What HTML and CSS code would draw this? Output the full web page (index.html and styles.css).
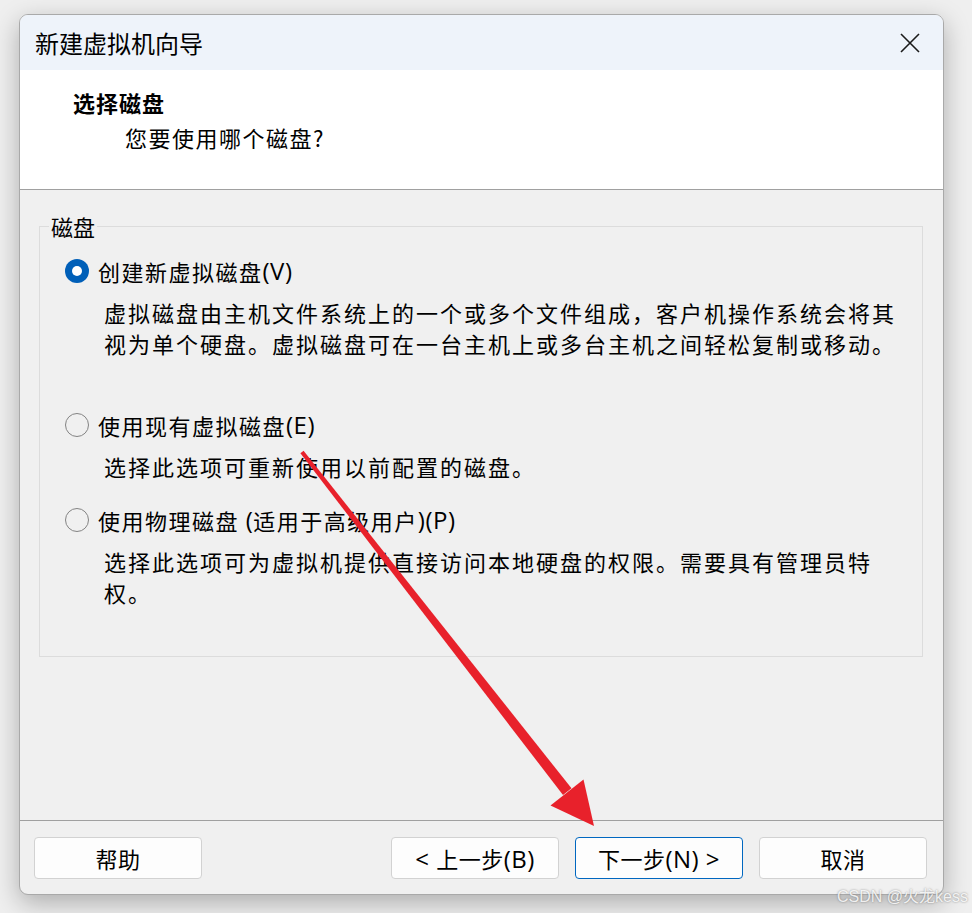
FILE: index.html
```html
<!DOCTYPE html>
<html lang="zh-CN">
<head>
<meta charset="utf-8">
<title>新建虚拟机向导</title>
<link rel="stylesheet" href="styles.css">
</head>
<body>
<div class="window">
  <div class="titlebar">
    <span class="title">新建虚拟机向导</span>
    <svg class="close" width="20" height="20" viewBox="0 0 20 20"><path d="M1 1 L19 19 M19 1 L1 19" stroke="#1a1a1a" stroke-width="1.6" fill="none"/></svg>
  </div>
  <div class="header">
    <div class="heading">选择磁盘</div>
    <div class="subheading">您要使用哪个磁盘?</div>
  </div>
  <div class="content">
    <fieldset class="group">
      <legend class="legend">磁盘</legend>
      <div class="option opt1">
        <div class="label"><span class="radio checked"></span>创建新虚拟磁盘<span class="key">(V)</span></div>
        <div class="desc">虚拟磁盘由主机文件系统上的一个或多个文件组成，客户机操作系统会将其视为单个硬盘。虚拟磁盘可在一台主机上或多台主机之间轻松复制或移动。</div>
      </div>
      <div class="option opt2">
        <div class="label"><span class="radio"></span>使用现有虚拟磁盘<span class="key">(E)</span></div>
        <div class="desc">选择此选项可重新使用以前配置的磁盘。</div>
      </div>
      <div class="option opt3">
        <div class="label"><span class="radio"></span>使用物理磁盘<span class="key">&nbsp;(</span>适用于高级用户<span class="key">)(P)</span></div>
        <div class="desc">选择此选项可为虚拟机提供直接访问本地硬盘的权限。需要具有管理员特权。</div>
      </div>
    </fieldset>
  </div>
  <div class="footer">
    <button class="btn">帮助</button>
    <div class="nav">
      <button class="btn"><span class="key">&lt; </span>上一步<span class="key">(B)</span></button>
      <button class="btn primary">下一步<span class="key">(N) &gt;</span></button>
      <button class="btn">取消</button>
    </div>
  </div>
</div>
<svg class="annotation" width="972" height="913" viewBox="0 0 972 913">
  <polygon fill="#e8212b" points="300.4,453.2 303.6,450.8 571.5,788.3 563.0,795.0"/>
  <polygon fill="#e8212b" points="594,826 550.5,805.5 583.5,779.5"/>
</svg>
<div class="watermark">CSDN @火龙kess</div>
</body>
</html>
```

FILE: styles.css
```css
* { box-sizing: border-box; }
html, body {
  margin: 0;
  padding: 0;
  width: 972px;
  height: 913px;
  overflow: hidden;
}
body {
  background: #efefef;
  font-family: "Noto Sans CJK SC", "Noto Sans", sans-serif;
  color: #000;
  position: relative;
}
.window {
  margin: 14px 0 0 19px;
  width: 925px;
  height: 881px;
  border: 1px solid #a9a9a9;
  border-radius: 9px;
  overflow: hidden;
  display: flex;
  flex-direction: column;
  background: #f0f0f0;
  box-shadow: 0 8px 26px rgba(0, 0, 0, 0.28);
}
.titlebar {
  height: 55px;
  flex: none;
  background: #eef3fa;
  display: flex;
  align-items: center;
  justify-content: space-between;
  padding: 0 23px 0 15px;
}
.title {
  font-size: 24px;
  line-height: 30px;
  color: #000;
}
.close { display: block; margin-top: 1px; }
.header {
  height: 120px;
  flex: none;
  background: #fff;
  border-bottom: 1px solid #a0a0a0;
  padding: 16px 0 0 53px;
}
.heading {
  font-size: 22px;
  line-height: 32px;
  font-weight: 700;
  letter-spacing: 1px;
}
.subheading {
  margin: 3px 0 0 52px;
  font-size: 22px;
  line-height: 32px;
  letter-spacing: 1.5px;
}
.content {
  flex: 1;
  padding: 21px 20px 0 19px;
}
.group {
  margin: 0;
  padding: 0 0 48px 0;
  border: 1px solid #dcdcdc;
  min-width: 0;
}
.legend {
  margin-left: 9px;
  padding: 0 2px;
  font-size: 22px;
  line-height: 30px;
}
.option { padding-left: 25px; }
.opt1 { margin-top: 15px; }
.opt2 { margin-top: 51px; }
.opt3 { margin-top: 23px; }
.label {
  display: flex;
  align-items: center;
  font-size: 22px;
  line-height: 30px;
  letter-spacing: 1.5px;
  white-space: pre;
}
.key {
  font-family: "Open Sans", "Noto Sans", sans-serif;
  font-size: 24px;
  letter-spacing: 0.5px;
}
.radio {
  width: 24px;
  height: 24px;
  border-radius: 50%;
  border: 1.5px solid #838383;
  margin-right: 9px;
  flex: none;
  position: relative;
}
.radio.checked {
  border: none;
  background: #005fb8;
}
.radio.checked::after {
  content: "";
  position: absolute;
  left: 7px;
  top: 7px;
  width: 10px;
  height: 10px;
  border-radius: 50%;
  background: #fff;
}
.desc {
  margin: 11px 0 0 39px;
  max-width: 808px;
  font-size: 22px;
  line-height: 31px;
  letter-spacing: 2px;
}
.footer {
  height: 74px;
  flex: none;
  border-top: 1px solid #a0a0a0;
  display: flex;
  justify-content: space-between;
  padding: 16px 16px 0 14px;
}
.nav { display: flex; gap: 16px; }
.btn {
  width: 168px;
  height: 42px;
  border: 1px solid #d2d2d2;
  border-radius: 4px;
  background: #fdfdfd;
  font-family: "Noto Sans CJK SC", "Noto Sans", sans-serif;
  font-size: 22px;
  line-height: 28px;
  color: #000;
  padding: 0;
  letter-spacing: 0.5px;
  white-space: pre;
}
.btn.primary { border-color: #0067c0; }
.annotation {
  position: absolute;
  left: 0;
  top: 0;
  pointer-events: none;
}
.watermark {
  position: absolute;
  right: 4px;
  bottom: 6px;
  font-family: "Liberation Sans", "Noto Sans CJK SC", sans-serif;
  font-size: 16px;
  line-height: 20px;
  color: rgba(255, 255, 255, 0.85);
  text-shadow: 0 0 2px rgba(90, 90, 90, 0.7);
}
```
